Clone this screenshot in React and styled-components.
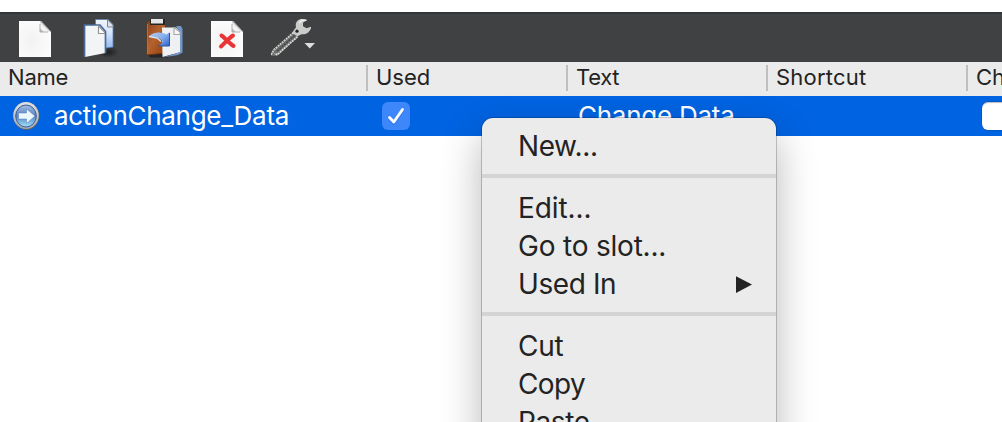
import React from "react";
import styled, { createGlobalStyle } from "styled-components";

const Global = createGlobalStyle`
  * { box-sizing: border-box; }
  html, body { margin: 0; background: #fff; overflow: hidden; }
  body { font-family: Inter, "Liberation Sans", sans-serif; color: #232323; }
`;

const Window = styled.main`
  position: relative;
  width: 1002px;
  height: 422px;
  padding-top: 12px;
  overflow: hidden;
  background: #fff;
`;

const Toolbar = styled.div`
  display: flex;
  gap: 24px;
  height: 50px;
  padding: 2px 0 0 15px;
  background: #404142;
  border-top: 2px solid #343537;
`;

const ToolButton = styled.button`
  flex: none;
  width: ${(p) => p.$width || 40}px;
  height: 44px;
  padding: 0;
  border: 0;
  background: none;

  svg { display: block; }
`;

const HeaderRow = styled.div`
  display: flex;
  height: 34px;
  background: #ebebeb;
`;

const HeaderCell = styled.div`
  display: flex;
  flex: none;
  align-items: flex-start;
  width: ${(p) => p.$width}px;
  padding: 2px 0 0 ${(p) => p.$indent || 8}px;
  font-size: 22px;
  line-height: 27px;
  letter-spacing: ${(p) => p.$spacing || 0}px;
  white-space: nowrap;

  &:not(:last-child)::after {
    content: "";
    width: 2px;
    height: 26px;
    margin: 1px 0 0 auto;
    background: #bfbfbf;
  }
`;

const Row = styled.div`
  display: flex;
  height: 40px;
  background: #0063e1;
  color: #fff;
`;

const Cell = styled.div`
  display: flex;
  flex: none;
  align-items: center;
  width: ${(p) => p.$width}px;
  padding-left: ${(p) => p.$indent || 0}px;
  font-size: 26px;
  line-height: 40px;
  letter-spacing: ${(p) => p.$spacing || 0}px;
  white-space: nowrap;

  svg { flex: none; }
`;

const ActionName = styled.span`
  margin-left: 14px;
`;

const Checkbox = styled.span`
  display: flex;
  flex: none;
  width: 28px;
  height: 28px;
  border-radius: 6px;
  background: ${(p) => (p.$checked ? "#3d87fb" : "#fff")};
  box-shadow: ${(p) => (p.$checked ? "none" : "inset 0 1px 1px #0004, 0 0 0 0.5px #0003")};
`;

const Menu = styled.div`
  position: absolute;
  left: 482px;
  top: 118px;
  width: 294px;
  height: 420px;
  padding-top: 10px;
  border-radius: 11px;
  background: #ebebeb;
  box-shadow: 0 0 0 1px rgba(0, 0, 0, 0.2), 0 18px 40px rgba(0, 0, 0, 0.29);
`;

const MenuItem = styled.div`
  display: flex;
  align-items: center;
  justify-content: space-between;
  height: 38px;
  padding: 0 24px 0 36px;
  font-size: 28px;
  line-height: 36px;
  letter-spacing: ${(p) => p.$spacing || 0}px;
  white-space: nowrap;
`;

const MenuLabel = styled.span`
  height: 38px;
`;

const Separator = styled.div`
  height: 4px;
  margin: 8px 0 12px;
  background: #d4d4d4;
`;

function PageIcon({ id, marked }) {
  return (
    <svg width="40" height="44" viewBox="0 0 40 44">
      <defs>
        <radialGradient id={id} cx="0.4" cy="0.55" r="0.7">
          <stop offset="0" stopColor="#f1f2f1" />
          <stop offset="1" stopColor="#fdfdfd" />
        </radialGradient>
        <linearGradient id={id + "-fold"} gradientUnits="userSpaceOnUse" x1="25" y1="16" x2="31" y2="10">
          <stop offset="0" stopColor="#858585" />
          <stop offset="0.45" stopColor="#fafafa" />
          <stop offset="0.75" stopColor="#eeeeee" />
          <stop offset="1" stopColor="#a8a8a8" />
        </linearGradient>
      </defs>
      <path d="M4 5h22l10 11v25H4z" fill={`url(#${id})`} />
      <path d="M25 5v11h11v-.5L26 5z" fill={`url(#${id}-fold)`} />
      <path d="M25 8v8h8" fill="none" stroke="#b0b0b0" strokeWidth="1" />
      {marked && (
        <path d="M14.500 19.500C18 22 22 27 26.500 30M26 19.500C22 22 18 27 14 30.500" fill="none" stroke="#e83435" strokeWidth="4" strokeLinecap="round" />
      )}
    </svg>
  );
}

function CopyIcon() {
  return (
    <svg width="40" height="44" viewBox="0 0 40 44">
      <defs>
        <linearGradient id="copy-back" x1="0" y1="0" x2="0" y2="1">
          <stop offset="0" stopColor="#f2f6fc" />
          <stop offset="0.45" stopColor="#d6e4fa" />
          <stop offset="1" stopColor="#92b8f0" />
        </linearGradient>
        <radialGradient id="copy-shadow">
          <stop offset="0" stopColor="#1d1e20" />
          <stop offset="1" stopColor="#404142" />
        </radialGradient>
      </defs>
      <ellipse cx="29" cy="36" rx="11" ry="6" fill="url(#copy-shadow)" />
      <path d="M16.500 3.500H29l5 5V31l-14 2h-3.500z" fill="url(#copy-back)" stroke="#5a7eb3" strokeWidth=".8" />
      <path d="M28.500 4v7h5.500V9z" fill="#dce2e9" stroke="#7c899b" strokeWidth="1" />
      <path d="M5.500 9H21l5.500 6.500V37L6 41z" fill="#f3f4f5" />
      <path d="M5.500 41V9H21l5.500 6.500V37" fill="none" stroke="#47699b" strokeWidth="1.700" />
      <path d="M19.500 10v7.500h6V16z" fill="#fff" stroke="#939597" strokeWidth="1.200" />
    </svg>
  );
}

function PasteIcon() {
  return (
    <svg width="40" height="44" viewBox="0 0 40 44">
      <defs>
        <linearGradient id="board" x1="0" y1="0" x2="1" y2="1">
          <stop offset="0" stopColor="#8f4218" />
          <stop offset="0.45" stopColor="#b4622f" />
          <stop offset="1" stopColor="#963e08" />
        </linearGradient>
        <linearGradient id="paste-arrow" x1="0" y1="0" x2="1" y2="1">
          <stop offset="0" stopColor="#b3cdf0" />
          <stop offset="0.5" stopColor="#87b0eb" />
          <stop offset="1" stopColor="#2c5fd0" />
        </linearGradient>
      </defs>
      <path d="M5 38h27l-7 3.500H7z" fill="#252627" />
      <path d="M4 5.500h18.500V37L4 39z" fill="url(#board)" stroke="#6f300d" strokeWidth=".8" />
      <path d="M4.500 8v30" stroke="#d16b20" />
      <path d="M7 3h15v6H7z" fill="#242424" />
      <path d="M8 3h12v4.500H8z" fill="#e6e6e6" />
      <path d="M19 11.500h14l5 5V36l-18.500 5z" fill="#eff0f2" />
      <path d="M33 10h5l1.500 3v23.500L35 39l-15 2.500 17-5.500V17z" fill="#7398c7" />
      <path d="M31 11.500v7h6V16z" fill="#f8f8f8" stroke="#a4a5a7" strokeWidth="1.100" />
      <path d="M6.500 20c5-4.500 12-4 17-1.500l3-2.500v14H16l4-4.500c-3-3.500-7-4-13.500-5.500z" fill="url(#paste-arrow)" />
      <path d="M6 20.500l8 1.500 4 3.500" fill="none" stroke="#d8e8fb" strokeWidth="1.300" />
      <path d="M15 30h11.500V17" fill="none" stroke="#315493" strokeWidth="1" />
    </svg>
  );
}

function WrenchIcon() {
  return (
    <svg width="46" height="44" viewBox="0 0 46 44">
      <g transform="translate(-1.500 -.3)">
        <path d="M24 18L3 35.500 1.500 40l6 .2L29 20z" fill="#6c6d6e" />
        <path d="M24 17L4.500 34l-3 5" fill="none" stroke="#d2d2cf" strokeWidth="1.800" strokeDasharray="2 .7" />
        <path d="M28 21L10 37l-2 2-3-1" fill="none" stroke="#dededb" strokeWidth="1.700" strokeDasharray="2 .7" />
        <path d="M25 20L7 36" stroke="#454647" strokeWidth="1.600" strokeDasharray="2 1" />
        <path d="M37 4.500c-3-2-7-1.500-9 .5-2 2-2 4-1.500 6.500l-4 5.500 5.500 3.500 4-2c4 .5 7.500-1 9.500-6v-1.500L37 12.500l-3.500-2V7z" fill="#cbcbc9" />
        <path d="M37 4.500h-5l-2 3" fill="none" stroke="#f0f0ef" strokeWidth="1.500" />
        <circle cx="27.500" cy="15.500" r="1.600" fill="#202122" />
      </g>
      <path d="M33.500 27h10.500l-5.250 5.500z" fill="#dedede" />
    </svg>
  );
}

function ActionIcon() {
  return (
    <svg width="28" height="30" viewBox="0 0 28 30">
      <defs>
        <linearGradient id="orb" x1="0" y1="0" x2="0" y2="1">
          <stop offset="0" stopColor="#a5bde3" />
          <stop offset="0.5" stopColor="#5482bf" />
          <stop offset="1" stopColor="#a3e4fc" />
        </linearGradient>
        <linearGradient id="orb-rim" x1="0" y1="0" x2="0" y2="1">
          <stop offset="0" stopColor="#e2e2e2" />
          <stop offset="1" stopColor="#a2a8b0" />
        </linearGradient>
      </defs>
      <ellipse cx="14.300" cy="15" rx="13" ry="14" fill="#59636f" />
      <ellipse cx="14" cy="14.500" rx="12.800" ry="13.500" fill="url(#orb-rim)" />
      <ellipse cx="14" cy="15" rx="10.300" ry="11" fill="url(#orb)" stroke="#3b5e98" />
      <path d="M6.500 12h8V8L23 15l-8.500 7.500V18h-8z" fill="#edf5fd" stroke="#547fba" strokeWidth=".5" />
    </svg>
  );
}

export default function App() {
  return (
    <Window>
      <Global />
      <Toolbar>
        <ToolButton aria-label="New"><PageIcon id="page-new" /></ToolButton>
        <ToolButton aria-label="Copy"><CopyIcon /></ToolButton>
        <ToolButton aria-label="Paste"><PasteIcon /></ToolButton>
        <ToolButton aria-label="Delete"><PageIcon id="page-delete" marked /></ToolButton>
        <ToolButton aria-label="Configure" $width={46}><WrenchIcon /></ToolButton>
      </Toolbar>
      <HeaderRow>
        <HeaderCell $width={368} $spacing={-0.2}>Name</HeaderCell>
        <HeaderCell $width={200}>Used</HeaderCell>
        <HeaderCell $width={200} $spacing={-0.3}>Text</HeaderCell>
        <HeaderCell $width={200} $spacing={0.2}>Shortcut</HeaderCell>
        <HeaderCell $width={140}>Checkable</HeaderCell>
      </HeaderRow>
      <Row>
        <Cell $width={368} $indent={12} $spacing={-0.29}>
          <ActionIcon />
          <ActionName>actionChange_Data</ActionName>
        </Cell>
        <Cell $width={200} $indent={14}>
          <Checkbox $checked>
            <svg width="28" height="28" viewBox="0 0 28 28">
              <path d="M7.500 16l4.300 4.500L20.500 7.500" fill="none" stroke="#1f5fc4" strokeWidth="3" strokeLinecap="round" strokeLinejoin="round" opacity=".35" transform="translate(0 1)" />
              <path d="M7.500 15.500l4.300 4.500L20.500 7.500" fill="none" stroke="#fff" strokeWidth="2.800" strokeLinecap="round" strokeLinejoin="round" />
            </svg>
          </Checkbox>
        </Cell>
        <Cell $width={200} $indent={10} $spacing={-0.25}>Change Data</Cell>
        <Cell $width={200} />
        <Cell $width={140} $indent={14}><Checkbox /></Cell>
      </Row>
      <Menu>
        <MenuItem $spacing={-0.4}><MenuLabel>New...</MenuLabel></MenuItem>
        <Separator />
        <MenuItem $spacing={-0.1}><MenuLabel>Edit...</MenuLabel></MenuItem>
        <MenuItem $spacing={-0.2}><MenuLabel>Go to slot...</MenuLabel></MenuItem>
        <MenuItem $spacing={-0.4}>
          <MenuLabel>Used In</MenuLabel>
          <svg width="16" height="18" viewBox="0 0 16 18"><path d="M0 .2L16 8.500 0 17z" fill="#232323" /></svg>
        </MenuItem>
        <Separator />
        <MenuItem $spacing={-0.3}><MenuLabel>Cut</MenuLabel></MenuItem>
        <MenuItem $spacing={-0.6}><MenuLabel>Copy</MenuLabel></MenuItem>
        <MenuItem $spacing={-0.4}><MenuLabel>Paste</MenuLabel></MenuItem>
      </Menu>
    </Window>
  );
}
